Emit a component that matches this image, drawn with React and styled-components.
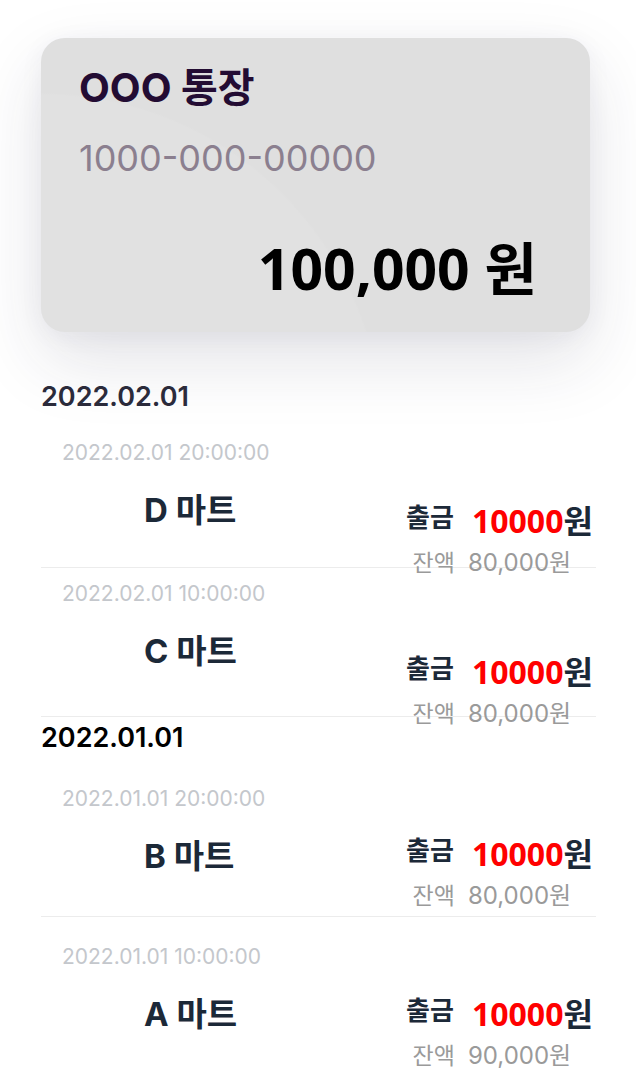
import styled, { createGlobalStyle } from 'styled-components';

const GlobalStyle = createGlobalStyle`
  html, body {
    margin: 0;
    padding: 0;
    background: #ffffff;
  }
  body {
    font-family: Inter, 'Noto Sans CJK KR', sans-serif;
    overflow: hidden;
  }
`;

const Page = styled.div`
  padding: 38px 40px 0 41px;
  display: flex;
  flex-direction: column;
`;

const Card = styled.section`
  width: 549px;
  height: 294px;
  box-sizing: border-box;
  padding: 25px 53px 29px 38px;
  border-radius: 24px;
  background:
    radial-gradient(circle at 0% 135%, #e1e1e1 0, #e1e1e1 340px, rgba(225, 225, 225, 0) 342px),
    #dfdfdf;
  box-shadow: 0 28px 70px rgba(40, 40, 70, 0.13), 0 4px 24px rgba(40, 40, 70, 0.05);
  display: flex;
  flex-direction: column;
`;

const CardTitle = styled.h1`
  margin: 0;
  font-size: 40px;
  line-height: 50px;
  font-weight: 700;
  color: #230c33;
`;

const AccountNo = styled.div`
  margin-top: 20px;
  font-size: 36px;
  line-height: 50px;
  color: #8b7f8f;
`;

const Balance = styled.div`
  margin-top: 50px;
  align-self: flex-end;
  font-family: 'Noto Sans', 'Noto Sans CJK KR', sans-serif;
  font-size: 57px;
  line-height: 70px;
  font-weight: 700;
  color: #000000;
`;

const DayHeader = styled.h2`
  margin: ${({ $top }) => $top}px 0 0;
  font-size: 27px;
  line-height: 36px;
  font-weight: 600;
  color: ${({ $color }) => $color};
`;

const Row = styled.div`
  padding-top: ${({ $top }) => $top}px;
  border-bottom: ${({ $line }) => ($line ? '1px solid #ececec' : 'none')};
`;

const Stamp = styled.div`
  padding-left: 21px;
  font-size: 21px;
  line-height: 24px;
  color: #c4c7cc;
`;

const Body = styled.div`
  height: ${({ $h }) => $h}px;
  display: grid;
  grid-template-columns: 362px auto;
  align-items: start;
`;

const Shop = styled.div`
  margin-top: 25px;
  padding-left: 103px;
  font-size: 33px;
  line-height: 40px;
  font-weight: 700;
  color: #1c2938;
`;

const Amounts = styled.div`
  margin-top: ${({ $top }) => $top}px;
  display: grid;
  grid-template-columns: auto auto;
  column-gap: 18px;
  align-items: center;
`;

const Kind = styled.span`
  justify-self: end;
  font-size: 26px;
  line-height: 40px;
  font-weight: 700;
  color: #1c2938;
`;

const Value = styled.span`
  padding-top: 6px;
  font-family: 'Noto Sans', 'Noto Sans CJK KR', sans-serif;
  font-size: 32px;
  line-height: 40px;
  font-weight: 700;
  color: #1c2938;
`;

const Red = styled.span`
  color: #ff0000;
`;

const Label = styled.span`
  justify-self: end;
  font-size: 23px;
  line-height: 44px;
  color: #9a9a9a;
  margin-right: -1px;
`;

const Rest = styled.span`
  margin-left: -4px;
  font-size: 24px;
  line-height: 44px;
  color: #9a9a9a;
`;

const days = [
  {
    date: '2022.02.01',
    top: 47,
    color: '#2b2b3b',
    items: [
      { at: '2022.02.01 20:00:00', shop: 'D 마트', rest: '80,000원', top: 26, h: 102, amt: 30, line: true },
      { at: '2022.02.01 10:00:00', shop: 'C 마트', rest: '80,000원', top: 14, h: 110, amt: 40, line: true },
    ],
  },
  {
    date: '2022.01.01',
    top: 3,
    color: '#000000',
    items: [
      { at: '2022.01.01 20:00:00', shop: 'B 마트', rest: '80,000원', top: 31, h: 105, amt: 17, line: true },
      { at: '2022.01.01 10:00:00', shop: 'A 마트', rest: '90,000원', top: 28, h: 110, amt: 19, line: false },
    ],
  },
];

function App() {
  return (
    <>
      <GlobalStyle />
      <Page>
        <Card>
          <CardTitle>OOO 통장</CardTitle>
          <AccountNo>1000-000-00000</AccountNo>
          <Balance>100,000 원</Balance>
        </Card>
        {days.map((day) => (
          <div key={day.date}>
            <DayHeader $top={day.top} $color={day.color}>{day.date}</DayHeader>
            {day.items.map((item) => (
              <Row key={item.at} $top={item.top} $line={item.line}>
                <Stamp>{item.at}</Stamp>
                <Body $h={item.h}>
                  <Shop>{item.shop}</Shop>
                  <Amounts $top={item.amt}>
                    <Kind>출금</Kind>
                    <Value>
                      <Red>10000</Red>원
                    </Value>
                    <Label>잔액</Label>
                    <Rest>{item.rest}</Rest>
                  </Amounts>
                </Body>
              </Row>
            ))}
          </div>
        ))}
      </Page>
    </>
  );
}

export default App;
